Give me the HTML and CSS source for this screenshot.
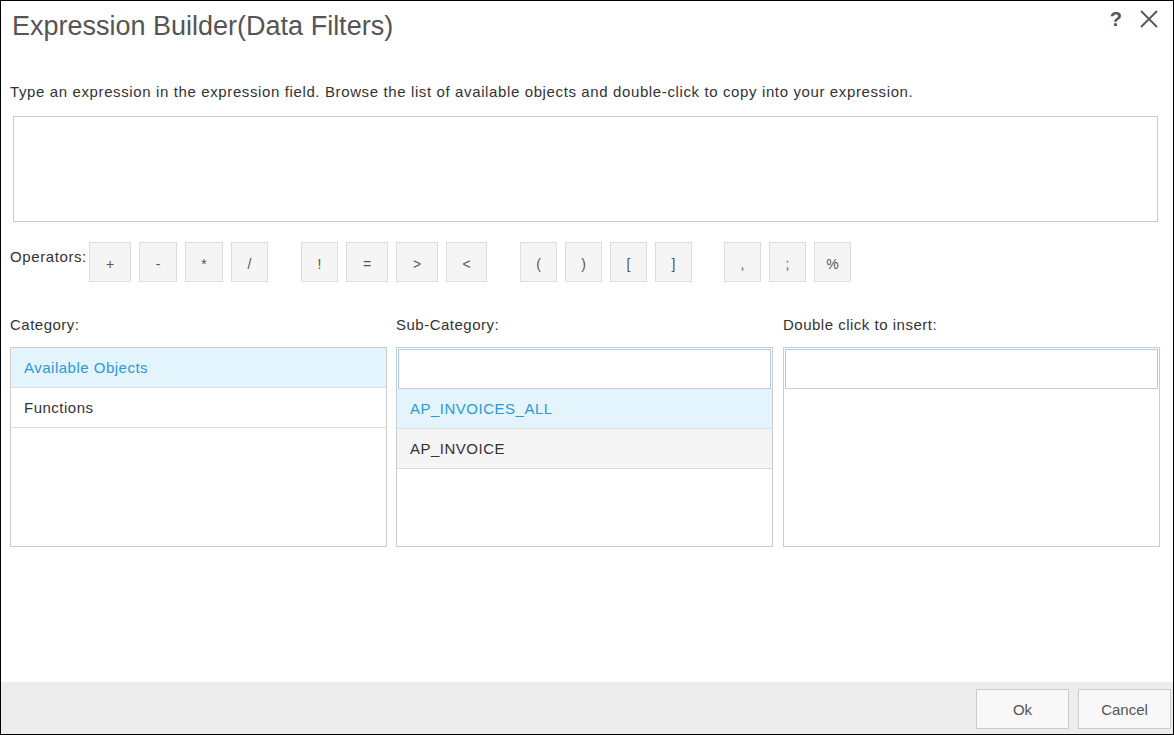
FILE: index.html
```html
<!DOCTYPE html>
<html>
<head>
<meta charset="utf-8">
<title>Expression Builder</title>
<link rel="stylesheet" href="styles.css">
</head>
<body>
<div class="dialog">
  <div class="header">
    <h1 class="title">Expression Builder(Data Filters)</h1>
    <div class="header-icons">
      <span class="help">?</span>
      <svg class="close" width="20" height="20" viewBox="0 0 20 20"><path d="M2 2 L18 18 M18 2 L2 18" stroke="#555" stroke-width="1.8" fill="none"/></svg>
    </div>
  </div>
  <div class="content">
    <p class="desc">Type an expression in the expression field. Browse the list of available objects and double-click to copy into your expression.</p>
    <div class="expr"></div>
    <div class="ops">
      <span class="ops-label">Operators:</span>
      <div class="op-group">
        <button class="op w42">+</button>
        <button class="op w38">-</button>
        <button class="op w38">*</button>
        <button class="op">/</button>
      </div>
      <div class="op-group">
        <button class="op">!</button>
        <button class="op w42">=</button>
        <button class="op w42">&gt;</button>
        <button class="op w41">&lt;</button>
      </div>
      <div class="op-group">
        <button class="op">(</button>
        <button class="op">)</button>
        <button class="op">[</button>
        <button class="op">]</button>
      </div>
      <div class="op-group last">
        <button class="op">,</button>
        <button class="op">;</button>
        <button class="op">%</button>
      </div>
    </div>
    <div class="columns">
      <div class="col">
        <div class="col-label">Category:</div>
        <div class="list">
          <div class="row selected">Available Objects</div>
          <div class="row">Functions</div>
        </div>
      </div>
      <div class="col">
        <div class="col-label">Sub-Category:</div>
        <div class="list">
          <div class="search"></div>
          <div class="row selected">AP_INVOICES_ALL</div>
          <div class="row hover">AP_INVOICE</div>
        </div>
      </div>
      <div class="col col-last">
        <div class="col-label">Double click to insert:</div>
        <div class="list">
          <div class="search"></div>
        </div>
      </div>
    </div>
  </div>
  <div class="footer">
    <button class="btn">Ok</button>
    <button class="btn">Cancel</button>
  </div>
</div>
</body>
</html>
```
FILE: styles.css
```css
* { box-sizing: border-box; }
html, body { margin: 0; padding: 0; }
body {
  font-family: "Liberation Sans", Arial, sans-serif;
  color: #333;
  background: #fff;
}
.dialog {
  width: 1174px;
  height: 735px;
  border: 1px solid #000;
  display: flex;
  flex-direction: column;
}
.header {
  display: flex;
  justify-content: space-between;
  align-items: flex-start;
  padding: 7px 14px 0 11px;
}
.title {
  margin: 0;
  font-weight: normal;
  font-size: 27px;
  line-height: 36px;
  color: #555;
}
.header-icons {
  display: flex;
  align-items: center;
  gap: 17px;
  padding-top: 0;
}
.help {
  font-weight: bold;
  font-size: 20px;
  line-height: 22px;
  color: #555;
}
.close { display: block; margin-top: -1px; }
.content {
  flex: 1;
  padding: 0 13px 0 9px;
}
.desc {
  margin: 39px 0 0 0;
  font-size: 15px;
  letter-spacing: 0.62px;
  line-height: 18px;
  color: #333;
}
.expr {
  margin: 15px 2px 0 3px;
  height: 106px;
  border: 1px solid #ccc;
}
.ops {
  display: flex;
  align-items: flex-start;
  margin-top: 20px;
  gap: 33px;
}
.ops-label {
  flex: 0 0 79px;
  font-size: 15px;
  letter-spacing: 0.6px;
  line-height: 18px;
  margin-top: 6px;
  margin-right: -33px;
  color: #333;
}
.op-group {
  display: flex;
  gap: 8px;
}
.op-group.last { margin-left: -1px; }
.op {
  width: 37px;
  height: 40px;
  padding: 0;
  margin: 0;
  border: 1px solid #ddd;
  background: #f5f5f5;
  font-family: "Liberation Sans", Arial, sans-serif;
  font-size: 14px;
  color: #555;
  padding-top: 4px;
}
.op.w38 { width: 38px; }
.op.w41 { width: 41px; }
.op.w42 { width: 42px; }
.columns {
  display: flex;
  gap: 9px;
  margin-top: 34px;
}
.col {
  width: 377px;
}
.col-last { margin-left: auto; }
.col-label {
  font-size: 15px;
  letter-spacing: 0.5px;
  line-height: 18px;
  color: #333;
}
.list {
  margin-top: 13px;
  height: 200px;
  border: 1px solid #ccc;
}
.row {
  height: 40px;
  border-bottom: 1px solid #ddd;
  padding: 0 13px;
  font-size: 15px;
  letter-spacing: 0.5px;
  line-height: 40px;
  color: #333;
}
.row.selected {
  background: #e4f4fd;
  color: #2b9ad4;
}
.row.hover {
  background: #f5f5f5;
}
.search {
  height: 40px;
  margin: 1px 1px 0 1px;
  border: 1px solid #a9c9ef;
  border-bottom-color: #ccc;
}
.footer {
  height: 52px;
  background: #ededed;
  display: flex;
  justify-content: flex-end;
  align-items: flex-start;
  gap: 9px;
  padding: 7px 2px 0 0;
}
.btn {
  width: 93px;
  height: 40px;
  border: 1px solid #ccc;
  background: #f8f8f8;
  font-family: "Liberation Sans", Arial, sans-serif;
  font-size: 15px;
  color: #555;
}
```
